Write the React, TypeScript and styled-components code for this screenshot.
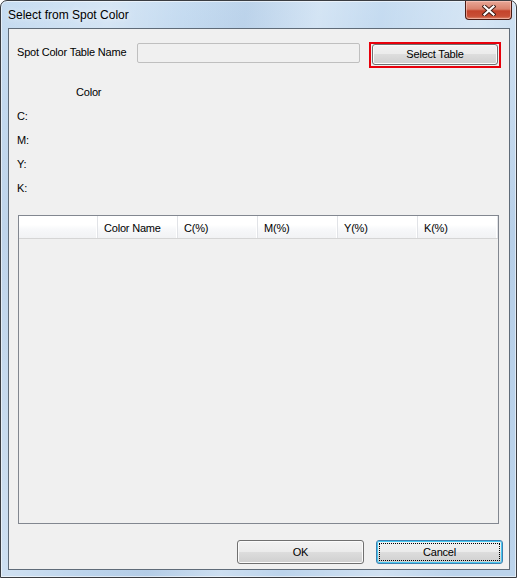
import React from "react";
import styled, { createGlobalStyle } from "styled-components";

const Global = createGlobalStyle`
  html, body { margin: 0; padding: 0; background: #ffffff; }
  * { box-sizing: border-box; }
`;

const Window = styled.div`
  width: 517px;
  height: 578px;
  display: flex;
  flex-direction: column;
  border: 1px solid #3a3d42;
  border-radius: 7px 7px 0 0;
  padding: 0 6px 7px 7px;
  background:
    linear-gradient(100deg, rgba(255,255,255,0) 0%, rgba(255,255,255,0.28) 18%, rgba(255,255,255,0) 30%,
      rgba(120,150,190,0.12) 40%, rgba(255,255,255,0.25) 52%, rgba(255,255,255,0) 62%,
      rgba(255,255,255,0.3) 78%, rgba(255,255,255,0) 90%),
    linear-gradient(180deg, #c6dcf1 0%, #b7cfe8 40%, #bcd4ec 100%);
  box-shadow: inset 0 0 0 1px rgba(255,255,255,0.55);
  font-family: "Liberation Sans", Arial, sans-serif;
  color: #000;
`;

const TitleBar = styled.div`
  height: 27px;
  display: flex;
  align-items: flex-start;
  justify-content: space-between;
  margin-right: -6px;
`;

const TitleText = styled.div`
  font-size: 12px;
  line-height: 14px;
  padding-top: 7px;
  color: #000;
  text-shadow: 0 0 6px rgba(255,255,255,0.9);
`;

const CloseButton = styled.div`
  width: 47px;
  height: 19px;
  margin-right: 4px;
  border: 1px solid #4a1c14;
  border-top: none;
  border-radius: 0 0 4px 4px;
  background: linear-gradient(180deg, #e8a797 0%, #d9826d 45%, #c4432b 55%, #c84f36 85%, #dd8a6f 100%);
  box-shadow: inset 0 0 0 1px rgba(255,210,200,0.55);
  display: flex;
  align-items: center;
  justify-content: center;
`;

const Client = styled.div`
  flex: 1;
  display: flex;
  flex-direction: column;
  border: 1px solid #5f6b78;
  background: #f0f0f0;
  font-size: 11px;
  letter-spacing: -0.2px;
`;

const NameRow = styled.div`
  display: flex;
  align-items: flex-start;
  margin-top: 14px;
  height: 20px;
  padding-left: 8px;
`;

const NameLabel = styled.div`
  width: 120px;
  line-height: 19px;
`;

const TextBox = styled.div`
  width: 223px;
  height: 20px;
  border: 1px solid #bfbfbf;
  border-radius: 2px;
  background: #f0f0f0;
`;

const Highlight = styled.div`
  margin-left: 9px;
  margin-top: -1px;
  border: 2px solid #e8000b;
  padding: 0 1px 1px 1px;
`;

const Button = styled.div<{ $w: number; $h: number; $focused?: boolean }>`
  position: relative;
  width: ${(p) => p.$w}px;
  height: ${(p) => p.$h}px;
  display: flex;
  align-items: center;
  justify-content: center;
  padding-bottom: 1px;
  border: 1px solid ${(p) => (p.$focused ? "#3c7fb1" : "#707070")};
  border-radius: 3px;
  background: linear-gradient(180deg, #f2f2f2 0%, #ebebeb 50%, #dddddd 50%, #cfcfcf 100%);
  box-shadow: inset 0 0 0 1px ${(p) => (p.$focused ? "#48c8f0" : "#fbfbfb")};
  font-size: 11px;
  color: #000;
  &::after {
    content: "";
    display: ${(p) => (p.$focused ? "block" : "none")};
    position: absolute;
    inset: 2px;
    border: 1px dotted #000;
  }
`;

const ColorTitle = styled.div`
  margin-top: 17px;
  height: 24px;
  line-height: 24px;
  padding-left: 67px;
`;

const ValueRow = styled.div`
  height: 24px;
  line-height: 24px;
  padding-left: 8px;
`;

const Table = styled.div`
  margin: 15px 10px 0 9px;
  height: 309px;
  border: 1px solid #828790;
  background: #f0f0f0;
  display: flex;
  flex-direction: column;
`;

const HeaderRow = styled.div`
  display: flex;
  height: 23px;
  background: linear-gradient(180deg, #ffffff 0%, #ffffff 40%, #f7f8fa 60%, #f1f2f4 100%);
  border-bottom: 1px solid #d5d5d5;
`;

const HeaderCell = styled.div<{ $w: number }>`
  width: ${(p) => p.$w}px;
  padding: 3px 0 0 6px;
  line-height: 19px;
  border-right: 1px solid #e1e3e7;
  box-shadow: inset -1px 0 0 #ffffff;
  color: #000;
`;

const ButtonRow = styled.div`
  display: flex;
  justify-content: flex-end;
  gap: 12px;
  margin-top: 16px;
  padding-right: 6px;
`;

const columns = ["", "Color Name", "C(%)", "M(%)", "Y(%)", "K(%)"];

export default function App() {
  return (
    <>
      <Global />
      <Window>
        <TitleBar>
          <TitleText>Select from Spot Color</TitleText>
          <CloseButton>
            <svg width="14" height="11" viewBox="0 0 14 11">
              <path d="M2.5 1.5 L11.5 9.5 M11.5 1.5 L2.5 9.5" stroke="#3a1a14" strokeWidth="4" strokeLinecap="square" />
              <path d="M2.5 1.5 L11.5 9.5 M11.5 1.5 L2.5 9.5" stroke="#ffffff" strokeWidth="2.2" strokeLinecap="square" />
            </svg>
          </CloseButton>
        </TitleBar>
        <Client>
          <NameRow>
            <NameLabel>Spot Color Table Name</NameLabel>
            <TextBox />
            <Highlight>
              <Button $w={126} $h={21}>Select Table</Button>
            </Highlight>
          </NameRow>
          <ColorTitle>Color</ColorTitle>
          <ValueRow>C:</ValueRow>
          <ValueRow>M:</ValueRow>
          <ValueRow>Y:</ValueRow>
          <ValueRow>K:</ValueRow>
          <Table>
            <HeaderRow>
              {columns.map((c, i) => (
                <HeaderCell key={i} $w={i === 0 ? 79 : 80}>
                  {c}
                </HeaderCell>
              ))}
            </HeaderRow>
          </Table>
          <ButtonRow>
            <Button $w={127} $h={24}>OK</Button>
            <Button $w={127} $h={24} $focused>Cancel</Button>
          </ButtonRow>
        </Client>
      </Window>
    </>
  );
}
